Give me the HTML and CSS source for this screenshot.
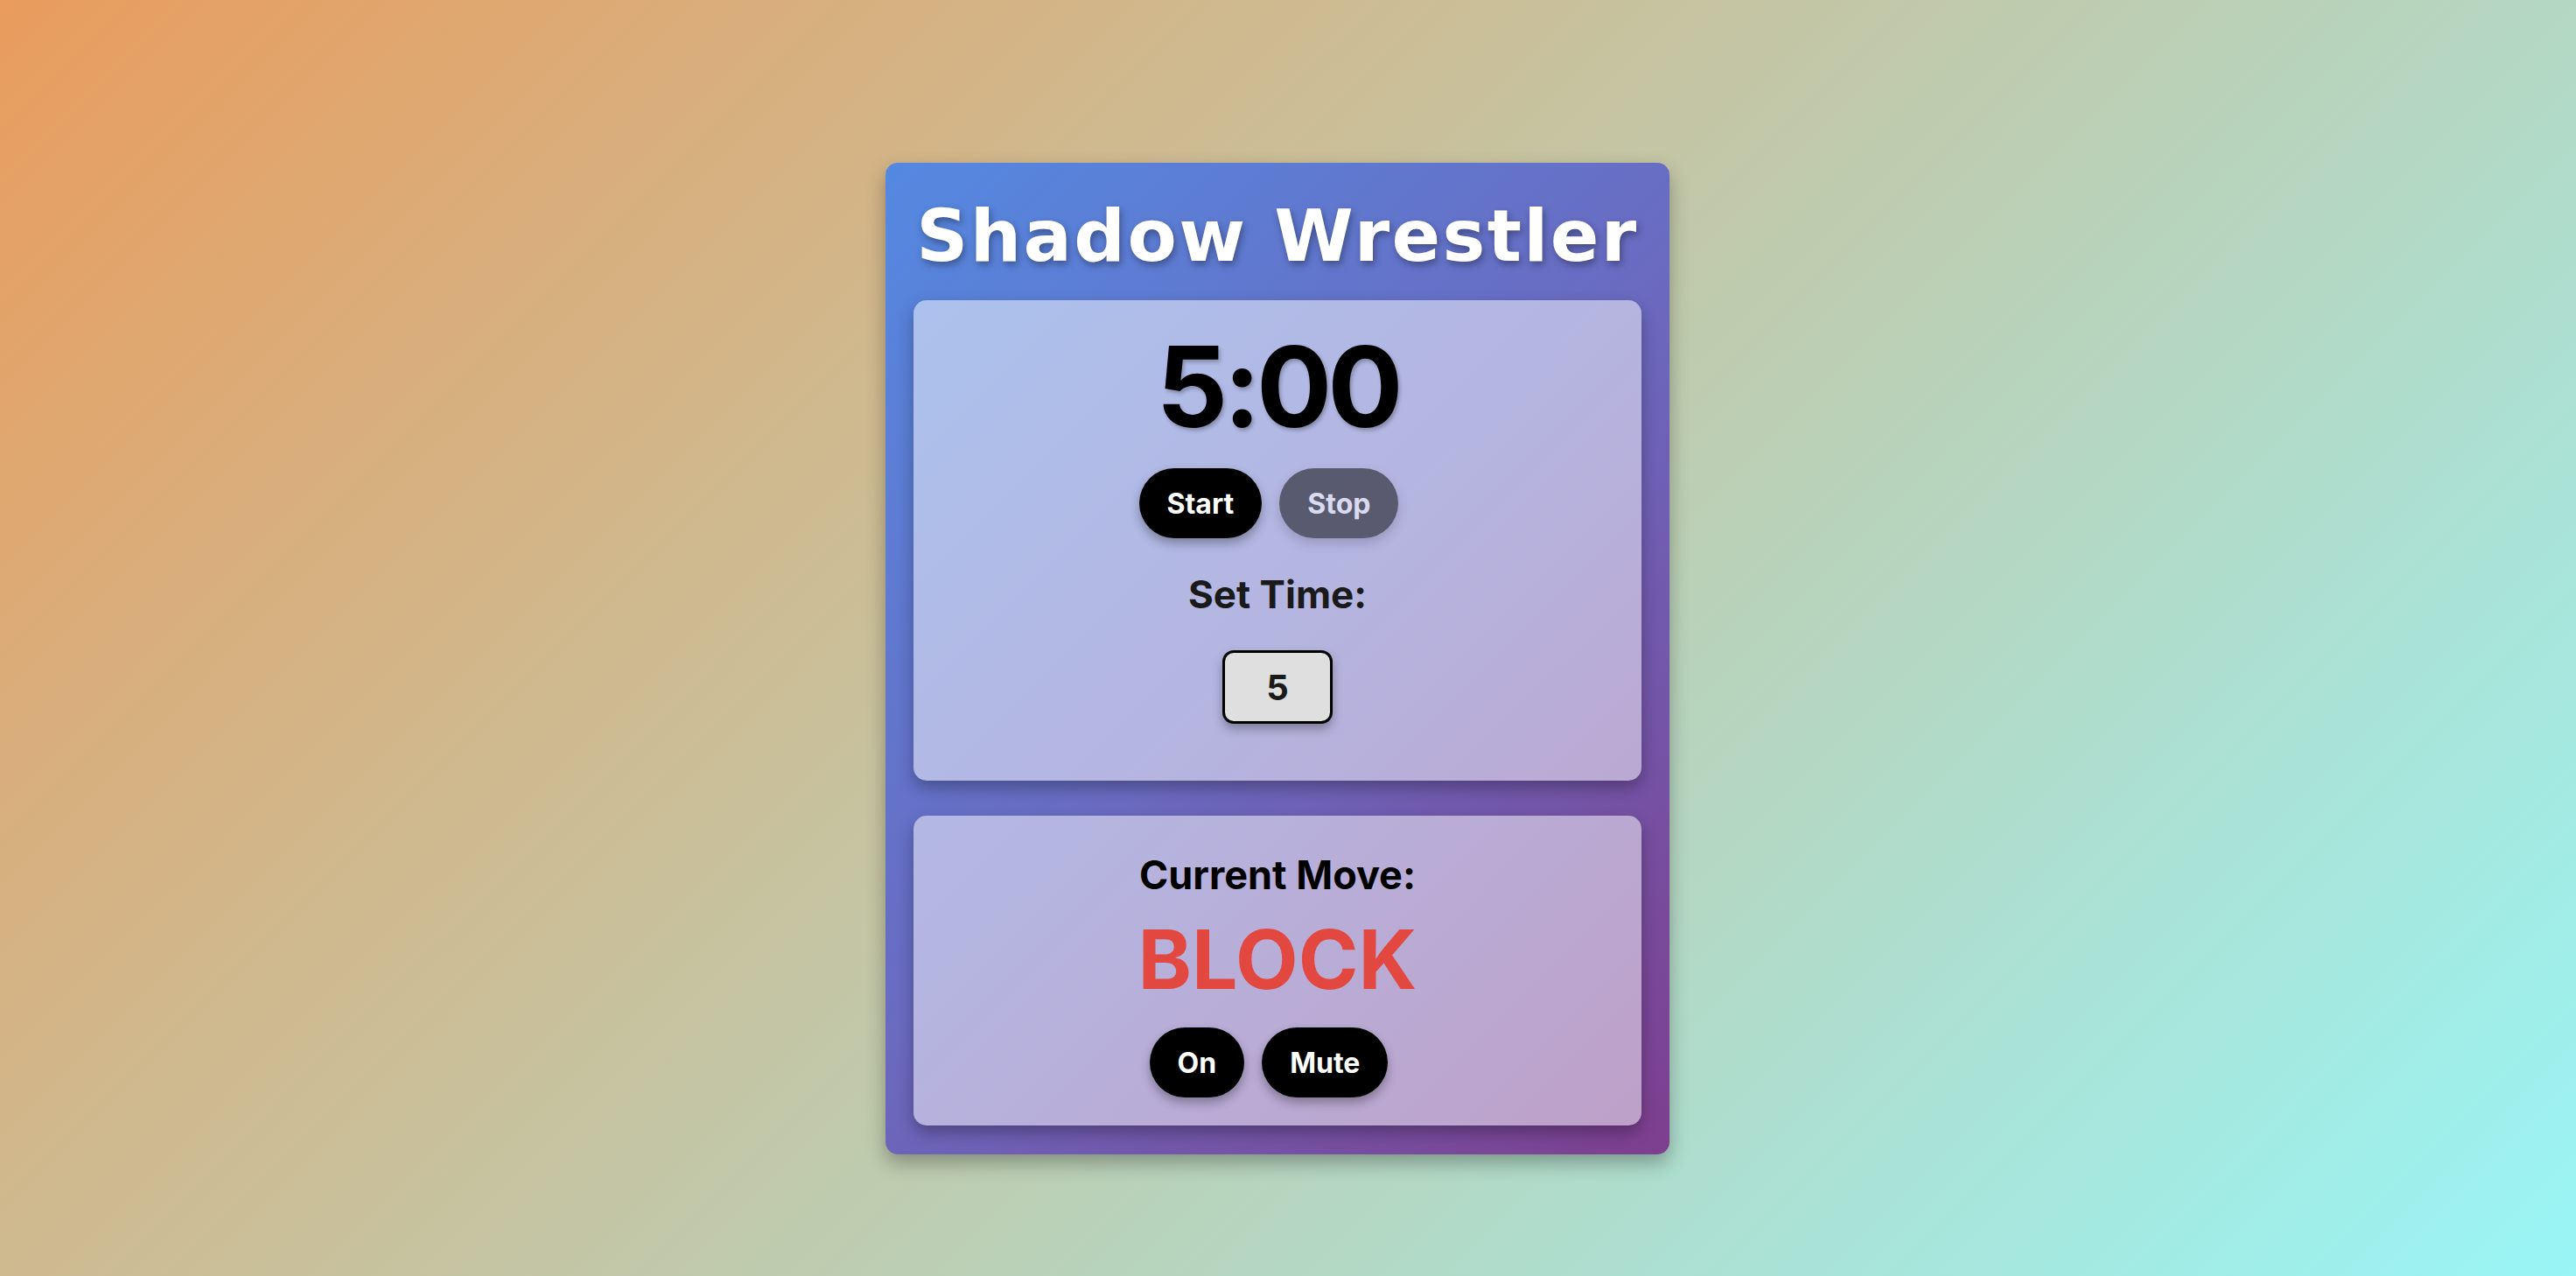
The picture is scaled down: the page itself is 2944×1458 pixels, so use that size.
FILE: index.html
```html
<!DOCTYPE html>
<html lang="en">
<head>
<meta charset="utf-8">
<title>Shadow Wrestler</title>
<link rel="stylesheet" href="styles.css">
</head>
<body>
<main class="page">
  <section class="card">
    <h1 class="title">Shadow Wrestler</h1>
    <div class="panel panel-timer">
      <div class="timer">5:00</div>
      <div class="btn-row">
        <button class="btn">Start</button>
        <button class="btn btn-disabled" disabled>Stop</button>
      </div>
      <label class="set-label" for="minutes">Set Time:</label>
      <input class="time-input" id="minutes" type="number" value="5">
    </div>
    <div class="panel panel-move">
      <h2 class="move-label">Current Move:</h2>
      <div class="move">BLOCK</div>
      <div class="btn-row">
        <button class="btn btn-on">On</button>
        <button class="btn">Mute</button>
      </div>
    </div>
  </section>
</main>
</body>
</html>
```
FILE: styles.css
```css
html, body {
  margin: 0;
  height: 100%;
}
body {
  background: linear-gradient(135deg, #e99c5d 0%, #99f5f6 100%);
  font-family: Inter, "Noto Sans", sans-serif;
  overflow: hidden;
}
.page {
  display: flex;
  justify-content: center;
  align-items: flex-start;
  padding: 186px 24px 0 0;
  box-sizing: border-box;
  height: 100%;
}
.card {
  width: 896px;
  box-sizing: border-box;
  padding: 36px 32px 33px;
  border-radius: 14px;
  background: linear-gradient(135deg, #5489e1 0%, #6a6ac0 50%, #7e3e8e 100%);
  box-shadow: 0 10px 22px rgba(0, 0, 0, 0.3);
  display: flex;
  flex-direction: column;
}
.title {
  margin: 0 0 26px;
  font-family: "DejaVu Sans", Verdana, sans-serif;
  font-weight: bold;
  font-size: 82px;
  line-height: normal;
  letter-spacing: 2.4px;
  text-align: center;
  color: #fff;
  text-shadow: 2px 4px 8px rgba(0, 0, 0, 0.35);
}
.panel {
  background: rgba(255, 255, 255, 0.5);
  border-radius: 15px;
  box-shadow: 0 8px 18px rgba(0, 0, 0, 0.3);
  display: flex;
  flex-direction: column;
  align-items: center;
}
.panel-timer {
  padding: 21px 32px 32px;
  margin-bottom: 40px;
}
.panel-move {
  padding: 40px 32px 32px;
}
.timer {
  font-size: 128px;
  font-weight: 700;
  line-height: normal;
  letter-spacing: -5px;
  color: #000;
  text-shadow: 2px 3px 4px rgba(0, 0, 0, 0.25);
}
.btn-row {
  display: flex;
  margin-top: 16px;
}
.btn {
  font-family: Inter, "Noto Sans", sans-serif;
  font-size: 32px;
  font-weight: 700;
  line-height: normal;
  color: #fff;
  background: #000;
  border: none;
  border-radius: 40px;
  height: 80px;
  padding: 0 32px;
  margin: 0 20px 0 0;
  box-shadow: 0 6px 12px rgba(0, 0, 0, 0.3);
  cursor: pointer;
}
.btn-disabled {
  opacity: 0.5;
  cursor: default;
}
.set-label {
  margin-top: 37px;
  font-size: 44px;
  font-weight: 700;
  line-height: normal;
  color: #1a1a1a;
}
.time-input {
  margin-top: 37px;
  margin-bottom: 33px;
  width: 126px;
  height: 84px;
  box-sizing: border-box;
  border: 3px solid #000;
  border-radius: 13px;
  background: #dfdfdf;
  font-family: Inter, "Noto Sans", sans-serif;
  font-size: 40px;
  font-weight: 700;
  color: #1a1a1a;
  text-align: center;
  padding: 0;
  box-shadow: 0 6px 12px rgba(0, 0, 0, 0.3);
  -moz-appearance: textfield;
  appearance: textfield;
}
.time-input::-webkit-inner-spin-button,
.time-input::-webkit-outer-spin-button {
  -webkit-appearance: none;
  margin: 0;
}
.move-label {
  margin: 0;
  font-size: 45px;
  font-weight: 700;
  line-height: normal;
  color: #000;
}
.move {
  margin-top: 13px;
  font-size: 93px;
  font-weight: 700;
  line-height: normal;
  color: #e24840;
}
.panel-move .btn-row {
  margin-top: 22px;
}
```
